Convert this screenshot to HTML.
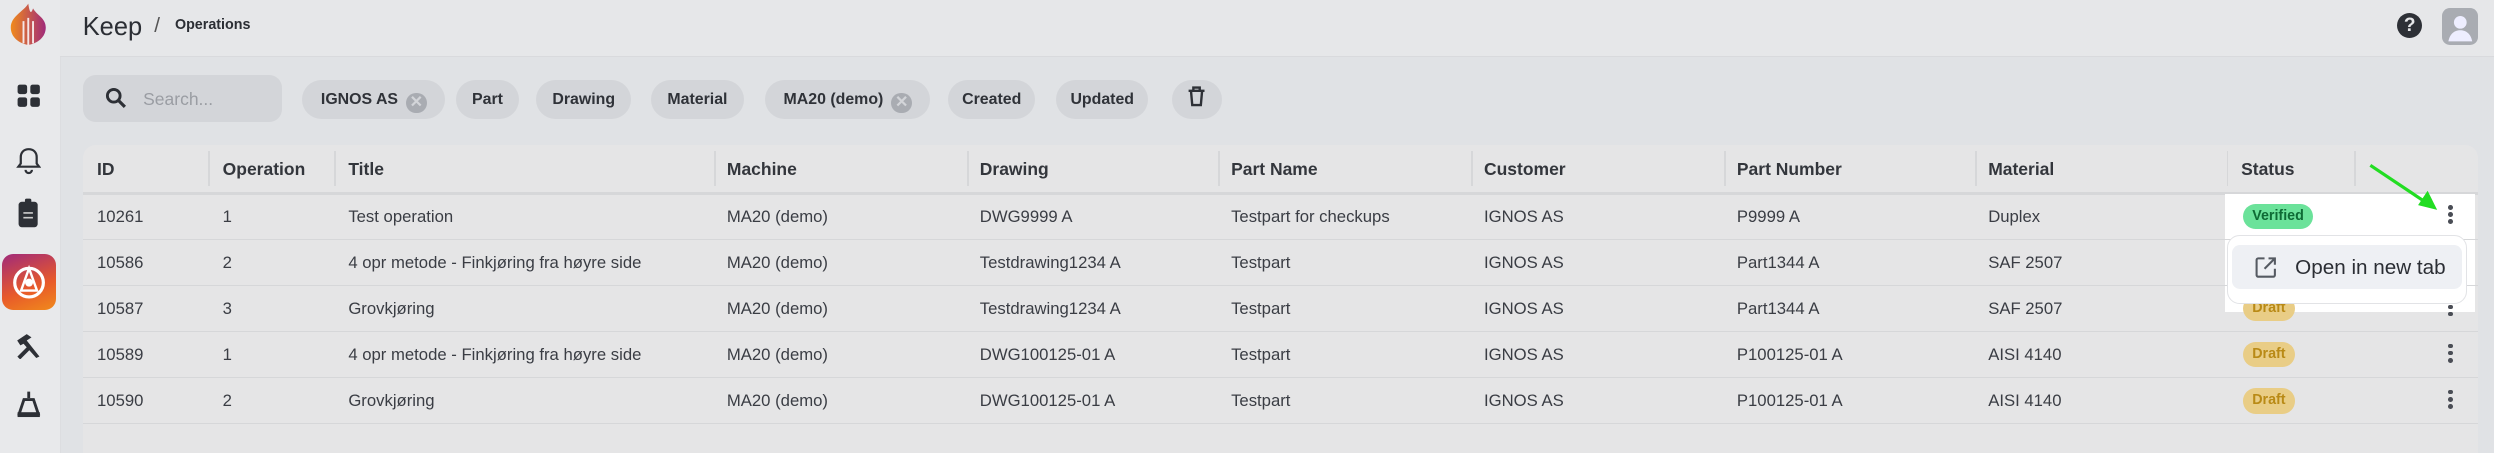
<!DOCTYPE html>
<html><head><meta charset="utf-8"><style>
html,body{margin:0;padding:0;background:#e2e3e6;overflow:hidden}
#r{width:1568px;height:285px;zoom:1.59056;position:relative;font-family:"Liberation Sans",sans-serif;color:#3a3d44;background:#e0e2e5}
.a{position:absolute}
.side{left:0;top:0;width:38px;height:285px;background:#e8e9eb;border-right:1px solid #dcdde0}
.hdr{left:38px;top:0;right:0;height:35px;background:#e6e7e9;border-bottom:1px solid #d9dadd}
.chip{position:absolute;top:50px;height:25px;border-radius:13px;background:#d3d5d9;font-size:10px;font-weight:bold;color:#2f3238;line-height:25px;text-align:center}
.x{display:inline-block;width:13px;height:13px;border-radius:50%;background:#a9acb2;color:#d3d5d9;font-size:10px;line-height:13px;vertical-align:-2px;margin-left:5px}
.tbl{left:52px;top:91px;width:1506px;height:194px;background:#e5e5e6;border-radius:8px 8px 0 0}
.row{position:absolute;left:0;width:1506px;height:28px;border-bottom:1px solid #d6d7d9;font-size:10.5px}
.row span{position:absolute;top:8px;white-space:nowrap}
.th span{font-weight:bold;font-size:11px;top:9px;color:#33363c}
.sep{position:absolute;top:4px;width:1px;height:22px;background:#d6d7d9}
.pill{position:absolute;height:16px;border-radius:8px;font-size:9px;font-weight:bold;line-height:16px;padding:0 6px;top:6px}
.dr{background:#e9cd86;color:#b98a16}
.keb{position:absolute;left:1487px;top:7px;width:3px}
.keb i{display:block;width:3px;height:3px;border-radius:50%;background:#4a4d55;margin-bottom:1.5px}
</style></head><body><div id="r">
<div class="a side"></div>
<div class="a hdr"></div>
<svg class="a" style="left:4px;top:1px" width="28" height="30" viewBox="0 0 28 30"><defs><linearGradient id="g" x1="0" x2="1"><stop offset="0" stop-color="#f08a1c"/><stop offset="1" stop-color="#a02a7a"/></linearGradient></defs><path d="M14 1C11 6 3 9 3 16c0 6 5 10 11 11 6-1 11-5 11-11 0-6-6-8-8-12-1 3-2 4-3-3z" fill="url(#g)"/><path d="M11 12v14M14 10v18M17 12v14" stroke="#f5e6e6" stroke-width="1.2"/></svg>
<div class="a" style="left:52px;top:8px;font-size:16px;color:#2b2e34">Keep</div>
<div class="a" style="left:97px;top:9px;font-size:13px;color:#555">/</div>
<div class="a" style="left:110px;top:11px;font-size:9px;font-weight:bold;color:#2b2e34">Operations</div>
<div class="a" style="left:1507px;top:8px;width:16px;height:16px;border-radius:50%;background:#2d3036;color:#e6e7e9;font-size:12px;font-weight:bold;text-align:center;line-height:16px">?</div>
<div class="a" style="left:1535px;top:5px;width:23px;height:23px;border-radius:5px;background:#a9acb2"><svg width="23" height="23"><circle cx="11.5" cy="9" r="4" fill="#eef"/><path d="M4 21c1-5 4-7 7.5-7s6.5 2 7.5 7z" fill="#eef"/></svg></div>
<!-- sidebar icons -->
<svg class="a" style="left:10px;top:52px" width="16" height="16"><rect x="1" y="1" width="6" height="6" rx="1.5" fill="#2d3036"/><rect x="9" y="1" width="6" height="6" rx="1.5" fill="#2d3036"/><rect x="1" y="9" width="6" height="6" rx="1.5" fill="#2d3036"/><rect x="9" y="9" width="6" height="6" rx="1.5" fill="#2d3036"/></svg>
<svg class="a" style="left:10px;top:92px" width="16" height="18"><path d="M8 2c-3 0-5 2-5 5v4l-1.5 2h13L13 11V7c0-3-2-5-5-5zM6 15a2 2 0 004 0" fill="none" stroke="#2d3036" stroke-width="1.4"/></svg>
<svg class="a" style="left:11px;top:124px" width="14" height="20"><rect x="1" y="3" width="12" height="16" rx="2" fill="#2d3036"/><rect x="5" y="1" width="4" height="4" rx="1" fill="#2d3036"/><path d="M4 10h6M4 13h6" stroke="#ccc" stroke-width="1"/></svg>
<div class="a" style="left:1px;top:160px;width:34px;height:35px;border-radius:7px;background:linear-gradient(160deg,#a02a7a,#e85a2a 60%,#f08a1c)"><svg width="34" height="35"><circle cx="17" cy="18" r="9" fill="none" stroke="#fff" stroke-width="2"/><circle cx="17" cy="18" r="2.5" fill="#fff"/><path d="M17 9l-5 14h10z" fill="none" stroke="#fff" stroke-width="1.5"/></svg></div>
<svg class="a" style="left:9px;top:208px" width="18" height="18"><path d="M2 6l6-4 3 2-3 2 8 10-2 1-8-9-2 1z" fill="#2d3036"/><path d="M10 10l-7 7" stroke="#2d3036" stroke-width="2.5"/></svg>
<svg class="a" style="left:10px;top:245px" width="16" height="18"><path d="M8 1v4M5 6h6l3 9H2z" fill="none" stroke="#2d3036" stroke-width="1.8"/><rect x="1" y="14" width="14" height="3" fill="#2d3036"/></svg>
<!-- search & chips -->
<div class="a" style="left:52px;top:47px;width:125px;height:30px;border-radius:8px;background:#d3d5d9"></div>
<svg class="a" style="left:66px;top:55px" width="14" height="14"><circle cx="5.5" cy="5.5" r="4" fill="none" stroke="#2d3036" stroke-width="1.8"/><path d="M8.5 8.5l4 4" stroke="#2d3036" stroke-width="2"/></svg>
<div class="a" style="left:90px;top:56px;font-size:11px;color:#9a9da3">Search...</div>
<div class="chip" style="left:190px;width:90px">IGNOS AS<span class="x">✕</span></div>
<div class="chip" style="left:287px;width:39px">Part</div>
<div class="chip" style="left:337px;width:60px">Drawing</div>
<div class="chip" style="left:409px;width:59px">Material</div>
<div class="chip" style="left:481px;width:104px">MA20 (demo)<span class="x">✕</span></div>
<div class="chip" style="left:596px;width:55px">Created</div>
<div class="chip" style="left:664px;width:58px">Updated</div>
<div class="chip" style="left:737px;width:31px"><svg width="12" height="13" style="vertical-align:-2px"><path d="M1 3h10M4 3V1h4v2M2.5 3l.8 9h5.4l.8-9" fill="none" stroke="#2d3036" stroke-width="1.5"/></svg></div>
<!-- table -->
<div class="a tbl">
<div class="row th" style="top:0;height:30px;border-bottom:2px solid #d6d7d9"><span style="left:9px">ID</span><span style="left:88px">Operation</span><span style="left:167px">Title</span><span style="left:405px">Machine</span><span style="left:564px">Drawing</span><span style="left:722px">Part Name</span><span style="left:881px">Customer</span><span style="left:1040px">Part Number</span><span style="left:1198px">Material</span><span style="left:1357px">Status</span>
<i class="sep" style="left:79px"></i><i class="sep" style="left:158px"></i><i class="sep" style="left:397px"></i><i class="sep" style="left:556px"></i><i class="sep" style="left:714px"></i><i class="sep" style="left:873px"></i><i class="sep" style="left:1032px"></i><i class="sep" style="left:1190px"></i><i class="sep" style="left:1348px"></i><i class="sep" style="left:1428px"></i></div>
<div class="a" style="left:1347px;top:31px;width:157px;height:74px;background:#fff"></div>
<div class="row" style="top:31px"><span style="left:9px">10261</span><span style="left:88px">1</span><span style="left:167px">Test operation</span><span style="left:405px">MA20 (demo)</span><span style="left:564px">DWG9999 A</span><span style="left:722px">Testpart for checkups</span><span style="left:881px">IGNOS AS</span><span style="left:1040px">P9999 A</span><span style="left:1198px">Duplex</span><b class="pill" style="left:1358px;background:#6be29a;color:#0e6b35">Verified</b><div class="keb"><i></i><i></i><i></i></div></div>
<div class="row" style="top:60px"><span style="left:9px">10586</span><span style="left:88px">2</span><span style="left:167px">4 opr metode - Finkjøring fra høyre side</span><span style="left:405px">MA20 (demo)</span><span style="left:564px">Testdrawing1234 A</span><span style="left:722px">Testpart</span><span style="left:881px">IGNOS AS</span><span style="left:1040px">Part1344 A</span><span style="left:1198px">SAF 2507</span></div>
<div class="row" style="top:89px"><span style="left:9px">10587</span><span style="left:88px">3</span><span style="left:167px">Grovkjøring</span><span style="left:405px">MA20 (demo)</span><span style="left:564px">Testdrawing1234 A</span><span style="left:722px">Testpart</span><span style="left:881px">IGNOS AS</span><span style="left:1040px">Part1344 A</span><span style="left:1198px">SAF 2507</span><b class="pill dr" style="left:1358px">Draft</b><div class="keb"><i></i><i></i><i></i></div></div>
<div class="row" style="top:118px"><span style="left:9px">10589</span><span style="left:88px">1</span><span style="left:167px">4 opr metode - Finkjøring fra høyre side</span><span style="left:405px">MA20 (demo)</span><span style="left:564px">DWG100125-01 A</span><span style="left:722px">Testpart</span><span style="left:881px">IGNOS AS</span><span style="left:1040px">P100125-01 A</span><span style="left:1198px">AISI 4140</span><b class="pill dr" style="left:1358px">Draft</b><div class="keb"><i></i><i></i><i></i></div></div>
<div class="row" style="top:147px"><span style="left:9px">10590</span><span style="left:88px">2</span><span style="left:167px">Grovkjøring</span><span style="left:405px">MA20 (demo)</span><span style="left:564px">DWG100125-01 A</span><span style="left:722px">Testpart</span><span style="left:881px">IGNOS AS</span><span style="left:1040px">P100125-01 A</span><span style="left:1198px">AISI 4140</span><b class="pill dr" style="left:1358px">Draft</b><div class="keb"><i></i><i></i><i></i></div></div>
</div>
<!-- menu -->
<div class="a" style="left:1400px;top:148px;width:150px;height:42px;background:#fff;border:1px solid #e2e3e6;border-radius:8px"></div>
<div class="a" style="left:1403px;top:154px;width:145px;height:28px;background:#eef0f4;border-radius:5px"></div>
<svg class="a" style="left:1418px;top:161px" width="14" height="14"><path d="M6 1.5H2a1 1 0 00-1 1V12a1 1 0 001 1h9.5a1 1 0 001-1V8M8.5 1.5h4v4M12.5 1.5L6 8" fill="none" stroke="#555a62" stroke-width="1.3"/></svg>
<div class="a" style="left:1443px;top:161px;font-size:13px;color:#2b2e34">Open in new tab</div>
<svg class="a" style="left:1486px;top:100px" width="52" height="36"><path d="M4 4L40 28" stroke="#22dd22" stroke-width="2"/><path d="M46 32L34 29l6-9z" fill="#22dd22"/></svg>
</div></body></html>
